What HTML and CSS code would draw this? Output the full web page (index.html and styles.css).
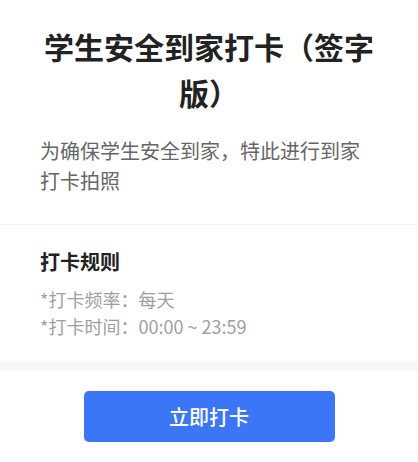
FILE: index.html
```html
<!DOCTYPE html>
<html lang="zh-CN">
<head>
    <title>学生安全到家打卡</title>
    <meta charset="UTF-8">
    <meta name="viewport" content="width=device-width, initial-scale=1.0">
    <link rel="stylesheet" href="styles.css">
</head>
<body>
    <div class="intro">
        <h1 class="title">学生安全到家打卡（签字版）</h1>
        <p class="desc">为确保学生安全到家，特此进行到家打卡拍照</p>
    </div>

    <div class="rules">
        <h3 class="rules-title">打卡规则</h3>
        <p class="rule">*打卡频率：每天</p>
        <p class="rule">*打卡时间：00:00 ~ 23:59</p>
    </div>

    <div class="gap"></div>

    <div class="actions">
        <button type="button" class="btn-primary">立即打卡</button>
    </div>
</body>
</html>
```

FILE: styles.css
```css
body { margin: 0; background: #fff; font-family: "Noto Sans CJK SC", "Liberation Sans", sans-serif; color: #222; }
p, h1, h3 { margin: 0; }
.intro { padding: 23px 40px 28px; border-bottom: 1px solid #f0f0f0; }
.title { font-size: 30px; line-height: 46px; font-weight: bold; text-align: center; color: #222; }
.desc { margin-top: 21px; font-size: 20px; line-height: 30px; color: #666; }
.rules { padding: 23px 40px 21px; }
.rules-title { font-size: 20px; line-height: 28px; font-weight: bold; color: #222; margin-bottom: 10px; }
.rule { font-size: 18px; line-height: 27px; color: #9e9e9e; }
.gap { height: 10px; background: #f6f7fb; }
.actions { display: flex; justify-content: center; padding-top: 20px; }
.btn-primary { width: 251px; height: 51px; border: none; border-radius: 5px; background: #3b76f6; color: #fff; font-family: inherit; font-size: 20px; font-weight: 500; cursor: pointer; }
```
